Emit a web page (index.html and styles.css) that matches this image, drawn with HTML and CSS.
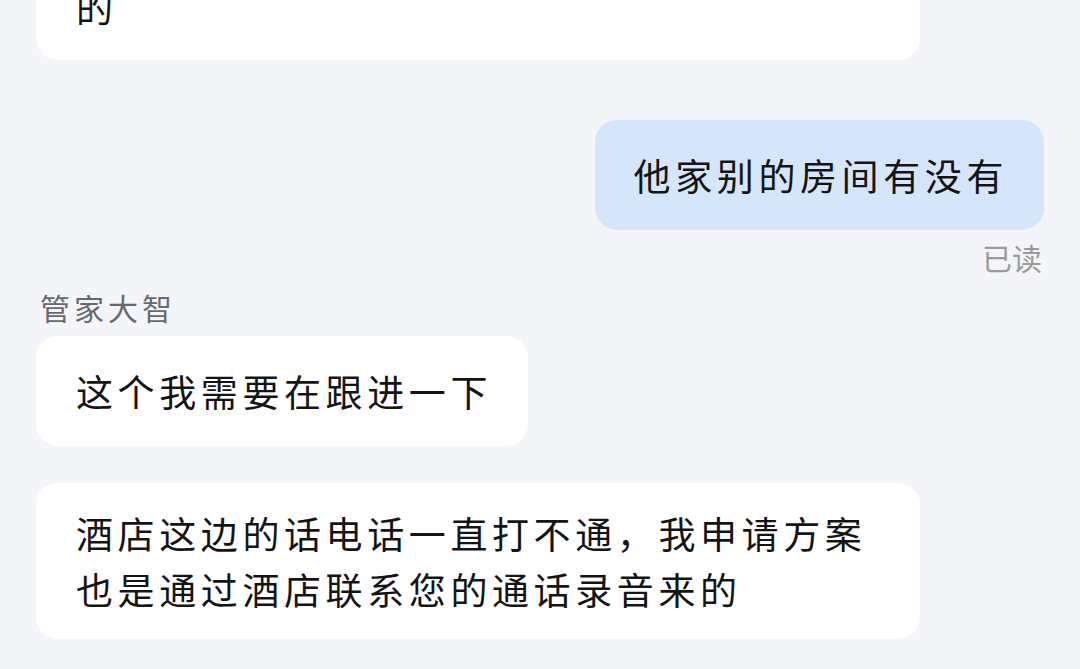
FILE: index.html
```html
<!DOCTYPE html>
<html lang="zh-CN">
<head>
<meta charset="utf-8">
<link rel="stylesheet" href="styles.css">
</head>
<body>
<div class="chat">
  <div class="bubble bubble-in bubble-cut">的</div>
  <div class="bubble bubble-out bubble-single">他家别的房间有没有</div>
  <div class="read">已读</div>
  <div class="sender">管家大智</div>
  <div class="bubble bubble-in bubble-single">这个我需要在跟进一下</div>
  <div class="bubble bubble-in bubble-multi">酒店这边的话电话一直打不通，我申请方案也是通过酒店联系您的通话录音来的</div>
</div>
</body>
</html>
```
FILE: styles.css
```css
html, body {
  margin: 0;
  padding: 0;
  background: #f4f5f9;
  overflow: hidden;
}
body {
  width: 1080px;
  height: 669px;
  font-family: "Noto Sans CJK SC", "Noto Sans", sans-serif;
  color: #141414;
}
.chat {
  display: flex;
  flex-direction: column;
  align-items: flex-start;
  padding: 0 36px;
}
.bubble {
  box-sizing: border-box;
  max-width: 884px;
  font-size: 37px;
  line-height: 56px;
  letter-spacing: 4.6px;
  border-radius: 22px;
  padding: 22px 36px 22px 40px;
}
.bubble-in {
  background: #ffffff;
}
.bubble-out {
  background: #d6e6fa;
  align-self: flex-end;
  margin-top: 60px;
  padding-left: 39px;
}
.bubble-cut {
  width: 884px;
  margin-top: -43px;
  padding-bottom: 25px;
  border-top-left-radius: 0;
  border-top-right-radius: 0;
}
.bubble-single {
  padding-top: 27px;
  padding-bottom: 27px;
}
.read {
  align-self: flex-end;
  font-size: 30px;
  line-height: 30px;
  margin-top: 12px;
  margin-right: 2px;
  color: #9a9a9a;
}
.sender {
  font-size: 30px;
  line-height: 34px;
  letter-spacing: 4px;
  color: #666a70;
  margin-top: 18px;
  padding-left: 4px;
}
.sender + .bubble {
  margin-top: 12px;
}
.bubble-multi {
  margin-top: 37px;
}
```
